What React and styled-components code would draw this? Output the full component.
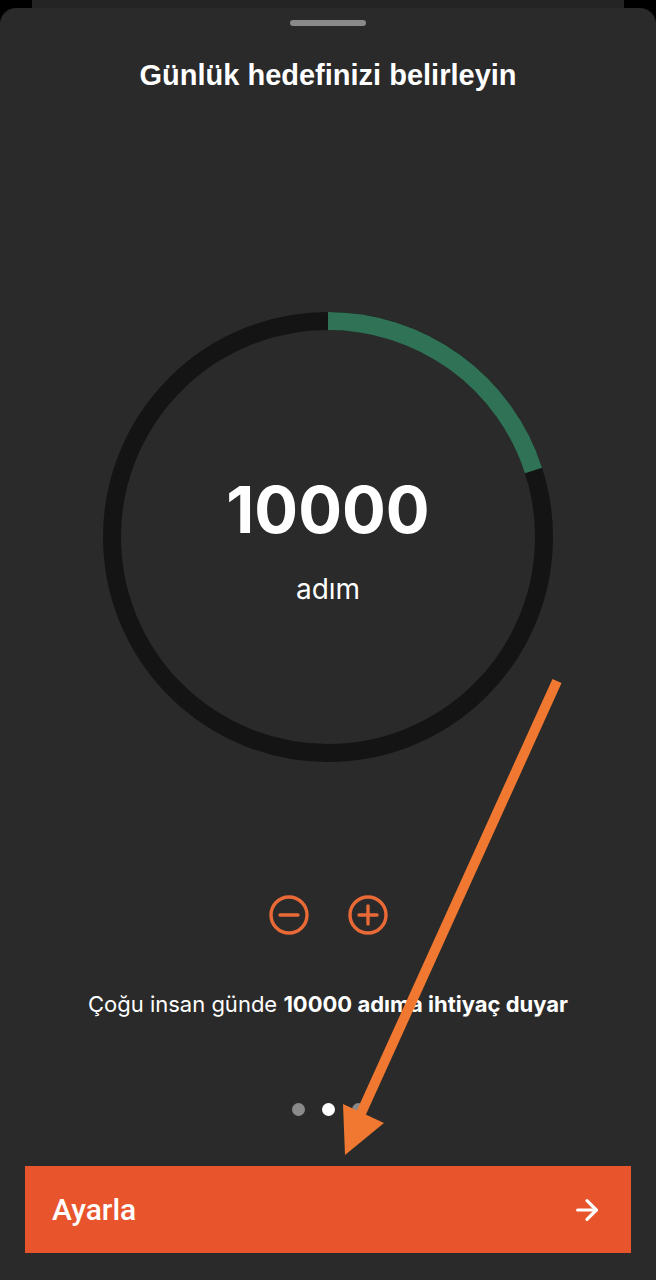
import styled, { createGlobalStyle } from "styled-components";
import { ArrowRight } from "lucide-react";

const GlobalStyle = createGlobalStyle`
  html, body {
    margin: 0;
    padding: 0;
    background: #000;
  }
  body {
    font-family: Inter, "Noto Sans", sans-serif;
    color: #fff;
  }
`;

const GOAL = 10000;
const PROGRESS = 0.2;

const Screen = styled.div`
  position: relative;
  width: 656px;
  height: 1280px;
  overflow: hidden;
  background: #000;
`;

const BackCard = styled.div`
  position: absolute;
  top: 0;
  left: 32px;
  right: 32px;
  height: 20px;
  background: #242424;
`;

const Sheet = styled.div`
  position: relative;
  margin-top: 8px;
  height: 1272px;
  background: #2a2a2a;
  border-radius: 16px 16px 0 0;
  display: flex;
  flex-direction: column;
  align-items: center;
  box-sizing: border-box;
  padding: 12px 25px 0;
`;

const Handle = styled.div`
  width: 76px;
  height: 6px;
  border-radius: 3px;
  background: #8a8a8a;
`;

const Title = styled.h1`
  margin: 34px 0 0;
  font-family: "Liberation Sans", Arial, sans-serif;
  font-weight: 700;
  font-size: 29px;
  line-height: 30px;
  letter-spacing: 0;
`;

const RingWrap = styled.div`
  position: relative;
  margin-top: 222px;
  width: 450px;
  height: 450px;
  display: flex;
  flex-direction: column;
  align-items: center;
  justify-content: center;
`;

const RingSvg = styled.svg`
  position: absolute;
  inset: 0;
`;

const Count = styled.div`
  position: relative;
  font-weight: 700;
  font-size: 65px;
  line-height: 70px;
  margin-top: 6px;
`;

const Unit = styled.div`
  position: relative;
  font-size: 28px;
  line-height: 32px;
  margin-top: 28px;
`;

const Stepper = styled.div`
  display: flex;
  gap: 39px;
  margin-top: 133px;
`;

const StepButton = styled.button`
  width: 40px;
  height: 40px;
  padding: 0;
  border: none;
  background: none;
  color: #e96a37;
  display: flex;
`;

const Hint = styled.p`
  margin: 55px 0 0;
  font-size: 22px;
  line-height: 28px;
  text-align: center;
  b {
    font-weight: 700;
  }
`;

const Dots = styled.div`
  display: flex;
  gap: 17px;
  margin-top: 85px;
`;

const Dot = styled.span`
  width: 13px;
  height: 13px;
  border-radius: 50%;
  background: ${({ $active }) => ($active ? "#fff" : "#8a8a8a")};
`;

const CtaButton = styled.button`
  margin-top: 50px;
  width: 606px;
  height: 87px;
  border: none;
  background: #e8542b;
  color: #fff;
  display: flex;
  align-items: center;
  justify-content: space-between;
  padding: 0 28px 0 27px;
  box-sizing: border-box;
  font-family: Roboto, "Noto Sans", sans-serif;
  font-weight: 500;
  font-size: 30px;
`;

const Overlay = styled.svg`
  position: absolute;
  inset: 0;
  pointer-events: none;
`;

const CircleIcon = ({ plus }) => (
  <svg width="40" height="40" viewBox="0 0 40 40" fill="none" stroke="currentColor" strokeWidth="3.4" strokeLinecap="round">
    <circle cx="20" cy="20" r="18" />
    <line x1="11" y1="20" x2="29" y2="20" />
    {plus && <line x1="20" y1="11" x2="20" y2="29" />}
  </svg>
);

const Ring = ({ progress }) => {
  const r = 216;
  const c = 2 * Math.PI * r;
  return (
    <RingSvg width="450" height="450" viewBox="0 0 450 450">
      <circle cx="225" cy="225" r={r} fill="none" stroke="#141414" strokeWidth="18" />
      <circle
        cx="225"
        cy="225"
        r={r}
        fill="none"
        stroke="#2f7256"
        strokeWidth="18"
        strokeDasharray={`${c * progress} ${c}`}
        transform="rotate(-90 225 225)"
      />
    </RingSvg>
  );
};

export default function App() {
  return (
    <>
      <GlobalStyle />
      <Screen>
        <BackCard />
        <Sheet>
          <Handle />
          <Title>Günlük hedefinizi belirleyin</Title>
          <RingWrap>
            <Ring progress={PROGRESS} />
            <Count>{GOAL}</Count>
            <Unit>adım</Unit>
          </RingWrap>
          <Stepper>
            <StepButton aria-label="azalt">
              <CircleIcon />
            </StepButton>
            <StepButton aria-label="artır">
              <CircleIcon plus />
            </StepButton>
          </Stepper>
          <Hint>
            Çoğu insan günde <b>{GOAL} adıma ihtiyaç duyar</b>
          </Hint>
          <Dots>
            <Dot />
            <Dot $active />
            <Dot />
          </Dots>
          <CtaButton>
            Ayarla
            <ArrowRight size={32} strokeWidth={2.4} />
          </CtaButton>
        </Sheet>
        <Overlay width="656" height="1280" viewBox="0 0 656 1280">
          <line x1="557" y1="681" x2="358" y2="1120" stroke="#f07830" strokeWidth="10" />
          <polygon points="343,1104 384,1123 345,1155" fill="#f07830" />
        </Overlay>
      </Screen>
    </>
  );
}
